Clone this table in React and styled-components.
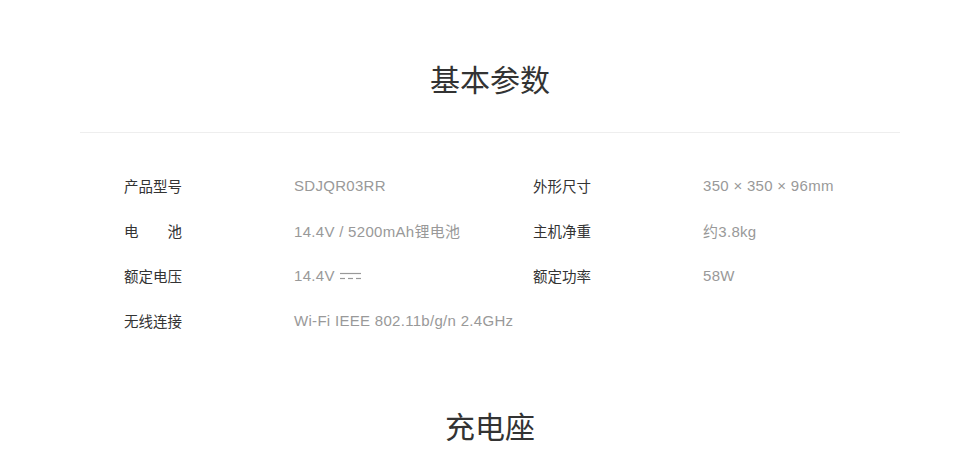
import React from "react";
import styled, { createGlobalStyle } from "styled-components";

const Global = createGlobalStyle`
  html, body { margin: 0; padding: 0; background: #fff; }
  body { font-family: "Liberation Sans", "Noto Sans CJK SC", sans-serif; }
`;

const Page = styled.div`
  width: 980px;
  padding-top: 58px;
  display: flex;
  flex-direction: column;
  align-items: center;
`;

const Title = styled.h2`
  margin: 0;
  font-family: "Noto Sans CJK SC", sans-serif;
  font-weight: 400;
  font-size: 30px;
  line-height: 40px;
  color: #333;
  text-align: center;
  margin-top: ${(p) => p.$top || 0}px;
`;

const Divider = styled.hr`
  width: 820px;
  margin: 34px 0 0;
  border: 0;
  border-top: 1px solid #eee;
`;

const Specs = styled.div`
  width: 820px;
  box-sizing: border-box;
  padding: 30px 0 0 44px;
  display: grid;
  grid-template-columns: 409px 367px;
`;

const Row = styled.div`
  display: flex;
  align-items: center;
  height: 45px;
`;

const Label = styled.span`
  width: 170px;
  flex: none;
  font-family: "Noto Sans CJK SC", sans-serif;
  font-size: 14.5px;
  color: #333;
`;

const Value = styled.span`
  font-family: "Liberation Sans", "Noto Sans CJK SC", sans-serif;
  font-size: 15px;
  color: #999;
  letter-spacing: 0.3px;
  display: inline-flex;
  align-items: center;
`;

const DC = () => (
  <svg width="22" height="10" viewBox="0 0 22 10" style={{ marginLeft: 5 }}>
    <line x1="0" y1="2.5" x2="21" y2="2.5" stroke="#999" strokeWidth="1.2" />
    <line x1="0" y1="7.5" x2="5" y2="7.5" stroke="#999" strokeWidth="1.2" />
    <line x1="8" y1="7.5" x2="13" y2="7.5" stroke="#999" strokeWidth="1.2" />
    <line x1="16" y1="7.5" x2="21" y2="7.5" stroke="#999" strokeWidth="1.2" />
  </svg>
);

const rows = [
  ["产品型号", "SDJQR03RR"],
  ["外形尺寸", "350 × 350 × 96mm"],
  ["电　　池", "14.4V / 5200mAh锂电池"],
  ["主机净重", "约3.8kg"],
  ["额定电压", <>14.4V<DC /></>],
  ["额定功率", "58W"],
  ["无线连接", "Wi-Fi IEEE 802.11b/g/n 2.4GHz"],
];

export default function App() {
  return (
    <>
      <Global />
      <Page>
        <Title>基本参数</Title>
        <Divider />
        <Specs>
          {rows.map(([l, v], i) => (
            <Row key={i}>
              <Label>{l}</Label>
              <Value>{v}</Value>
            </Row>
          ))}
        </Specs>
        <Title $top={62}>充电座</Title>
      </Page>
    </>
  );
}
